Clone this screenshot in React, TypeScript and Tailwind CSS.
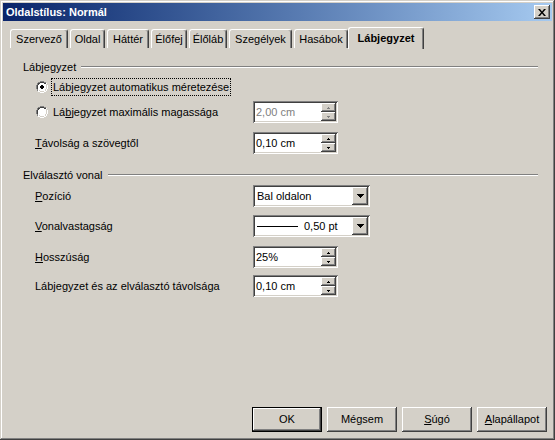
import type { ReactNode } from 'react';

// Win2000-style "Oldalstílus: Normál" dialog, Lábjegyzet page

const RAISED =
  'shadow-[inset_-1px_-1px_0_#404040,inset_1px_1px_0_#ffffff,inset_-2px_-2px_0_#808080,inset_2px_2px_0_#d4d0c8]';
const SUNKEN =
  'shadow-[inset_1px_1px_0_#808080,inset_-1px_-1px_0_#ffffff,inset_2px_2px_0_#404040,inset_-2px_-2px_0_#d4d0c8]';

const TABS: [string, number][] = [
  ['Szervező', 58],
  ['Oldal', 35],
  ['Háttér', 42],
  ['Élőfej', 36],
  ['Élőláb', 38],
  ['Szegélyek', 63],
  ['Hasábok', 54],
];

export default function App() {
  return (
    <div className="font-['Liberation_Sans',Arial,sans-serif] text-[11px] text-black">
      <div
        className={`flex h-[440px] w-[555px] flex-col bg-[#d4d0c8] p-[3px] shadow-[inset_-1px_-1px_0_#404040,inset_1px_1px_0_#d4d0c8,inset_-2px_-2px_0_#808080,inset_2px_2px_0_#ffffff]`}
      >
        {/* Title bar */}
        <div className="flex h-[18px] items-center bg-gradient-to-r from-[#0a246a] to-[#a6caf0] pl-[3px] pr-[2px]">
          <span className="flex-1 font-bold text-white">Oldalstílus: Normál</span>
          <button className={`flex h-[14px] w-[16px] items-center justify-center bg-[#d4d0c8] ${RAISED}`}>
            <svg width="8" height="7" viewBox="0 0 8 7">
              <path d="M0 0h2l2 2.5L6 0h2L5 3.5 8 7H6L4 4.5 2 7H0l3-3.5z" fill="#000" />
            </svg>
          </button>
        </div>

        {/* Tabs */}
        <div className="mx-[5px] mt-[6px] flex h-[21px] items-end gap-[2px] pl-[2px]">
          {TABS.map(([label, w]) => (
            <Tab key={label} label={label} width={w} />
          ))}
          <div className="relative z-10 -mb-px -ml-[2px] flex h-[22px] w-[76px] items-center justify-center rounded-t-[3px] border-l border-t border-white border-r border-r-[#404040] bg-[#d4d0c8] font-bold shadow-[inset_-1px_0_0_#808080]">
            Lábjegyzet
          </div>
        </div>

        {/* Page panel */}
        <div className={`mx-[5px] flex h-[354px] flex-col bg-[#d4d0c8] pt-[11px] ${RAISED.replace('inset_2px_2px_0_#d4d0c8', 'inset_0_0_0_transparent')}`}>
          <GroupHeader label="Lábjegyzet" />

          <div className="mt-px flex h-[22px] items-center">
            <div className="flex w-[245px] items-center pl-[28px]">
              <Radio checked />
              <span className="ml-[4px] px-px outline-1 outline-dotted outline-black">
                Lábjegyzet automatikus méretezése
              </span>
            </div>
          </div>

          <div className="mt-[3px] flex h-[22px] items-center">
            <div className="flex w-[245px] items-center pl-[28px]">
              <Radio />
              <span className="ml-[5px]">
                Lá<u>b</u>jegyzet maximális magassága
              </span>
            </div>
            <SpinField value="2,00 cm" disabled />
          </div>

          <Row mt="mt-[9px]" label={<><u>T</u>ávolság a szövegtől</>}>
            <SpinField value="0,10 cm" />
          </Row>

          <div className="mt-[13px]">
            <GroupHeader label="Elválasztó vonal" />
          </div>

          <Row mt="mt-[2px]" label={<><u>P</u>ozíció</>}>
            <Combo>
              <span className="pl-[2px]">Bal oldalon</span>
            </Combo>
          </Row>

          <Row mt="mt-[8px]" label={<><u>V</u>onalvastagság</>}>
            <Combo>
              <span className="ml-[2px] mr-[6px] h-px w-[41px] bg-black" />
              <span>0,50 pt</span>
            </Combo>
          </Row>

          <Row mt="mt-[9px]" label={<><u>H</u>osszúság</>}>
            <SpinField value="25%" />
          </Row>

          <Row mt="mt-[7px]" label={<>Láb<u>j</u>egyzet és az elválasztó távolsága</>}>
            <SpinField value="0,10 cm" />
          </Row>
        </div>

        {/* Buttons */}
        <div className="mt-[5px] flex justify-end gap-[5px] pr-[5px]">
          <Button label="OK" isDefault />
          <Button label="Mégsem" />
          <Button label={<><u>S</u>úgó</>} />
          <Button label={<><u>A</u>lapállapot</>} />
        </div>
      </div>
    </div>
  );
}

function Tab({ label, width }: { label: string; width: number }) {
  return (
    <div
      className="flex h-[19px] items-center justify-center rounded-t-[3px] border-l border-t border-white border-r border-r-[#404040] bg-[#d4d0c8] shadow-[inset_-1px_0_0_#808080]"
      style={{ width }}
    >
      {label}
    </div>
  );
}

function GroupHeader({ label }: { label: string }) {
  return (
    <div className="flex h-[16px] items-center pl-[15px] pr-[9px]">
      <span>{label}</span>
      <span className="ml-[5px] h-[2px] flex-1 border-t border-b border-t-[#808080] border-b-white" />
    </div>
  );
}

function Row({ label, children, mt }: { label: ReactNode; children: ReactNode; mt: string }) {
  return (
    <div className={`${mt} flex h-[22px] items-center`}>
      <div className="w-[245px] pl-[27px]">{label}</div>
      {children}
    </div>
  );
}

function Radio({ checked }: { checked?: boolean }) {
  return (
    <svg width="12" height="12" viewBox="0 0 12 12" className="shrink-0">
      <path d="M4 0h4v1h2v1h1v2h1v4h-1v2h-1v1H8v1H4v-1H2v-1H1V8H0V4h1V2h1V1h2z" fill="#ffffff" />
      <path d="M4 0h4v1H4zM2 1h2v1H2zM8 1h2v1H8zM1 2h1v2H1zM0 4h1v4H0zM1 8h1v2H1z" fill="#808080" />
      <path d="M4 1h4v1H4zM2 2h2v1H2zM8 2h2v1H8zM1 4h1v4H1zM2 3h1v1H2z" fill="#404040" />
      <path d="M10 8h1v2h-1zM11 4h1v4h-1zM8 10h2v1H8zM4 11h4v1H4zM2 10h2v1H2z" fill="#ffffff" />
      <path d="M10 3h1v5h-1zM9 8h1v2H9zM4 10h4v1H4zM3 9h1v1H3z" fill="#d4d0c8" />
      <path d="M4 3h4v6H4z" fill="#ffffff" />
      <path d="M3 4h6v4H3z" fill="#ffffff" />
      {checked && <path d="M5 4h2v1h1v2H7v1H5V7H4V5h1z" fill="#000" />}
    </svg>
  );
}

function SpinField({ value, disabled }: { value: string; disabled?: boolean }) {
  const arrow = disabled ? '#808080' : '#000';
  return (
    <div className={`flex h-[22px] w-[85px] items-center bg-white p-[2px] ${SUNKEN}`}>
      <span className={`flex-1 pl-px ${disabled ? 'text-[#808080]' : ''}`}>{value}</span>
      <div className="flex h-[18px] w-[15px] flex-col">
        <div className={`flex h-[9px] items-center justify-center bg-[#d4d0c8] ${RAISED}`}>
          <svg width="3" height="2" viewBox="0 0 3 2">
            <path d="M1 0h1v1h1v1H0V1h1z" fill={arrow} />
          </svg>
        </div>
        <div className={`flex h-[9px] items-center justify-center bg-[#d4d0c8] ${RAISED}`}>
          <svg width="3" height="2" viewBox="0 0 3 2">
            <path d="M0 0h3v1H2v1H1V1H0z" fill={arrow} />
          </svg>
        </div>
      </div>
    </div>
  );
}

function Combo({ children }: { children: ReactNode }) {
  return (
    <div className={`flex h-[22px] w-[117px] items-center bg-white p-[2px] ${SUNKEN}`}>
      <div className="flex flex-1 items-center">{children}</div>
      <div className={`flex h-[18px] w-[16px] items-center justify-center bg-[#d4d0c8] ${RAISED}`}>
        <svg width="7" height="4" viewBox="0 0 7 4">
          <path d="M0 0h7v1H6v1H5v1H4v1H3V3H2V2H1V1H0z" fill="#000" />
        </svg>
      </div>
    </div>
  );
}

function Button({ label, isDefault }: { label: ReactNode; isDefault?: boolean }) {
  return (
    <button
      className={`flex h-[25px] w-[70px] items-center justify-center bg-[#d4d0c8] ${
        isDefault ? 'border border-black' : ''
      } ${RAISED}`}
    >
      {label}
    </button>
  );
}
